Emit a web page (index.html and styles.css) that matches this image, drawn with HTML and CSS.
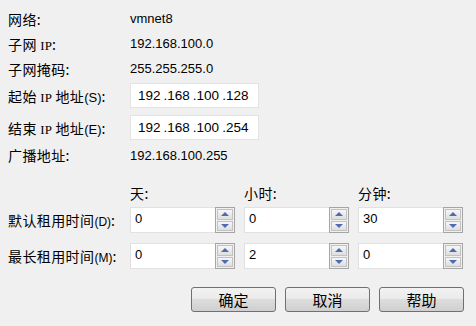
FILE: index.html
```html
<!DOCTYPE html>
<html lang="zh-CN">
<head>
<meta charset="utf-8">
<link rel="stylesheet" href="styles.css">
</head>
<body>
<div class="dlg">
  <div class="row info"><span class="lbl">网络:</span><span class="val">vmnet8</span></div>
  <div class="row info"><span class="lbl">子网 <span class="ip">IP</span>:</span><span class="val">192.168.100.0</span></div>
  <div class="row info"><span class="lbl">子网掩码:</span><span class="val">255.255.255.0</span></div>
  <div class="row field first"><span class="lbl">起始 <span class="ip">IP</span> 地址<span class="acc">(S)</span>:</span><span class="ipbox"><span>192</span>.<span>168</span>.<span>100</span>.<span>128</span></span></div>
  <div class="row field"><span class="lbl">结束 <span class="ip">IP</span> 地址<span class="acc">(E)</span>:</span><span class="ipbox"><span>192</span>.<span>168</span>.<span>100</span>.<span>254</span></span></div>
  <div class="row bcast"><span class="lbl">广播地址:</span><span class="val">192.168.100.255</span></div>

  <div class="row head"><span class="lbl"></span><span class="col">天:</span><span class="col">小时:</span><span class="col">分钟:</span></div>
  <div class="row spin first"><span class="lbl">默认租用时间<span class="acc2">(D)</span>:</span>
    <span class="spinbox"><span class="num">0</span><span class="arrows"><span class="up"></span><span class="down"></span></span></span>
    <span class="spinbox"><span class="num">0</span><span class="arrows"><span class="up"></span><span class="down"></span></span></span>
    <span class="spinbox"><span class="num">30</span><span class="arrows"><span class="up"></span><span class="down"></span></span></span>
  </div>
  <div class="row spin"><span class="lbl">最长租用时间<span class="acc2">(M)</span>:</span>
    <span class="spinbox"><span class="num">0</span><span class="arrows"><span class="up"></span><span class="down"></span></span></span>
    <span class="spinbox"><span class="num">2</span><span class="arrows"><span class="up"></span><span class="down"></span></span></span>
    <span class="spinbox"><span class="num">0</span><span class="arrows"><span class="up"></span><span class="down"></span></span></span>
  </div>

  <div class="buttons">
    <button class="btn">确定</button>
    <button class="btn">取消</button>
    <button class="btn">帮助</button>
  </div>
</div>
</body>
</html>
```
FILE: styles.css
```css
html, body {
  margin: 0;
  padding: 0;
  background: #f0f0f0;
}
body {
  width: 476px;
  height: 326px;
  overflow: hidden;
  font-family: "Noto Sans CJK SC", "Liberation Sans", sans-serif;
  font-size: 14px;
  color: #000;
}
.dlg {
  padding: 6px 0 0 8px;
  display: flex;
  flex-direction: column;
}
.row {
  display: flex;
  align-items: center;
}
.lbl {
  width: 122px;
  flex: none;
  letter-spacing: 0.4px;
  white-space: nowrap;
}
.ip {
  font-family: "Liberation Serif", serif;
  font-size: 13px;
  letter-spacing: 0;
}
.acc {
  font-family: "Liberation Sans", sans-serif;
  font-size: 13px;
  letter-spacing: 0;
}
.acc2 {
  font-family: "Liberation Sans", sans-serif;
  font-size: 12px;
  letter-spacing: 0;
}
.val {
  font-family: "Liberation Sans", sans-serif;
  font-size: 13px;
}
.info { height: 25px; }
.field { height: 25px; margin-top: 7px; }
.field.first { margin-top: 2px; }
.ipbox {
  box-sizing: border-box;
  width: 129px;
  height: 25px;
  background: #fff;
  border: 1px solid #e3e3e3;
  display: flex;
  align-items: center;
  padding-left: 7px;
  font-family: "Liberation Sans", sans-serif;
  font-size: 13.5px;
}
.ipbox span { margin-right: 3px; }
.bcast { height: 24px; margin-top: 3px; }
.head { height: 20px; margin-top: 16px; }
.col {
  width: 114px;
  flex: none;
  font-size: 14px;
  letter-spacing: 0.4px;
}
.spin { height: 26px; margin-top: 4px; gap: 9px; }
.spin + .spin { margin-top: 10px; }
.spin .lbl { margin-right: -9px; }
.spinbox {
  box-sizing: border-box;
  width: 105px;
  height: 26px;
  background: #fff;
  border: 1px solid #e1e1e1;
  display: flex;
  justify-content: space-between;
}
.num {
  font-family: "Liberation Sans", sans-serif;
  font-size: 13px;
  padding: 3px 0 0 4px;
}
.arrows {
  box-sizing: border-box;
  width: 20px;
  height: 26px;
  margin: -1px -1px -1px 0;
  border: 1px solid #a5a5a5;
  background: #f0f0f0;
  display: flex;
  flex-direction: column;
  padding: 1px;
  gap: 1px;
}
.up, .down {
  flex: 1;
  border: 1px solid #c2c2c2;
  background: linear-gradient(#f6f6f6, #dedede);
  display: flex;
  align-items: center;
  justify-content: center;
}
.up::before {
  content: "";
  border-left: 4px solid transparent;
  border-right: 4px solid transparent;
  border-bottom: 4px solid #4d6bb0;
}
.down::before {
  content: "";
  border-left: 4px solid transparent;
  border-right: 4px solid transparent;
  border-top: 4px solid #4d6bb0;
}
.buttons {
  display: flex;
  justify-content: flex-end;
  gap: 9px;
  margin-top: 18px;
  padding-right: 12px;
}
.btn {
  box-sizing: border-box;
  width: 85px;
  height: 25px;
  border: 1px solid #707070;
  border-radius: 3px;
  background: linear-gradient(#f2f2f2 0%, #ebebeb 45%, #dddddd 50%, #cfcfcf 100%);
  font-family: "Noto Sans CJK SC", sans-serif;
  font-size: 15px;
  color: #000;
  padding: 0;
  line-height: 21px;
}
```
